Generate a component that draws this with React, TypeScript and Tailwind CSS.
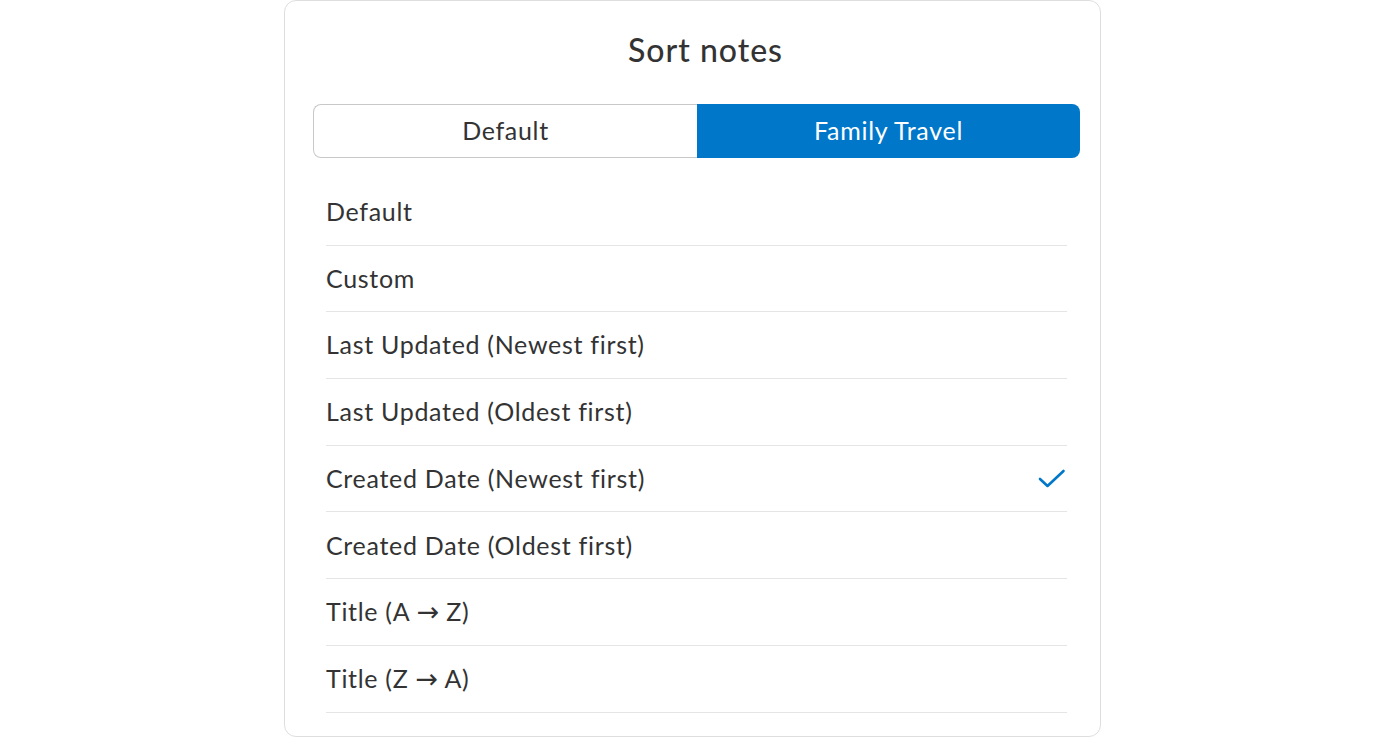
import React, { useState } from 'react';

const options = [
  'Default',
  'Custom',
  'Last Updated (Newest first)',
  'Last Updated (Oldest first)',
  'Created Date (Newest first)',
  'Created Date (Oldest first)',
  'Title (A → Z)',
  'Title (Z → A)',
];

// arrows in the labels get their own font so they come out short with a solid head
const Label = ({ text }: { text: string }) => {
  const parts = text.split('→');
  if (parts.length === 1) return <>{text}</>;
  return (
    <>
      {parts[0]}
      <span className="text-[27px] leading-none tracking-normal" style={{ fontFamily: '"DejaVu Sans", sans-serif' }}>→</span>
      {parts[1]}
    </>
  );
};

const App = () => {
  const [scope, setScope] = useState('family');
  const [selected, setSelected] = useState(4);

  return (
    <div className="w-[1400px] h-[737px] bg-white pl-[284px] overflow-hidden" style={{ fontFamily: 'Lato, "Open Sans", sans-serif' }}>
      <div className="w-[817px] h-[737px] border border-[#dedede] rounded-[12px] flex flex-col">
        {/* header */}
        <h1 className="h-[40px] mt-[29px] pl-[26px] text-center text-[32px] leading-[40px] tracking-[1px] font-medium text-[#333]">
          Sort notes
        </h1>

        {/* segmented control */}
        <div className="mt-[34px] ml-[28px] w-[767px] h-[54px] flex">
          <button
            onClick={() => setScope('default')}
            className={`flex-1 rounded-l-[8px] text-[25px] tracking-[0.7px] ${scope === 'default' ? 'bg-[#0077c8] text-white' : 'bg-white text-[#333] border border-r-0 border-[#c8c8c8]'}`}
          >
            Default
          </button>
          <button
            onClick={() => setScope('family')}
            className={`flex-1 rounded-r-[8px] text-[25px] tracking-[0.7px] ${scope === 'family' ? 'bg-[#0077c8] text-white' : 'bg-white text-[#333] border border-l-0 border-[#c8c8c8]'}`}
          >
            Family Travel
          </button>
        </div>

        {/* options */}
        <ul className="mt-[21px] ml-[41px] w-[741px]">
          {options.map((opt, i) => (
            <li
              key={opt}
              onClick={() => setSelected(i)}
              className="h-[66.7px] border-b border-[#e5e5e5] flex items-center justify-between cursor-pointer"
            >
              <span className="text-[25px] tracking-[0.7px] text-[#333]">
                <Label text={opt} />
              </span>
              {selected === i && (
                <svg width="28" height="22" viewBox="0 0 28 22" className="mr-[1px]">
                  <path d="M2 11 L9.5 18 L25.5 3" fill="none" stroke="#0077c8" strokeWidth="2.6" strokeLinecap="round" strokeLinejoin="round" />
                </svg>
              )}
            </li>
          ))}
        </ul>
      </div>
    </div>
  );
};

export default App;
